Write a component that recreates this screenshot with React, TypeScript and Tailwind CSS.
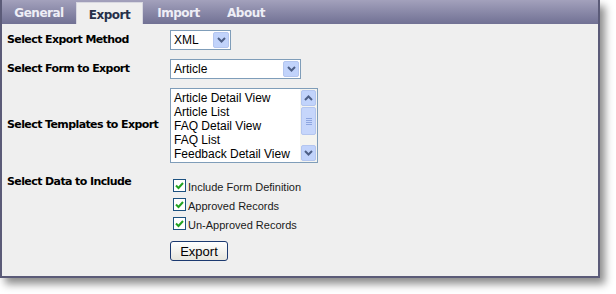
import React from "react";

const tabs = [
  { name: "General", w: "w-[74px]" },
  { name: "Export", w: "w-[67px]" },
  { name: "Import", w: "w-[71px]" },
  { name: "About", w: "w-[64px]" },
];
const templates = [
  "Article Detail View",
  "Article List",
  "FAQ Detail View",
  "FAQ List",
  "Feedback Detail View",
];
const includes = ["Include Form Definition", "Approved Records", "Un-Approved Records"];

function Chevron({ className = "" }: { className?: string }) {
  return (
    <svg width="9" height="6" viewBox="0 0 9 6" className={className}>
      <path d="M1 1 L4.5 4.5 L8 1" fill="none" stroke="#4d5f86" strokeWidth="2" />
    </svg>
  );
}

function Select({ value, width }: { value: string; width: string }) {
  return (
    <div className={`flex items-center h-[20px] border border-[#7f9db9] bg-white ${width}`}>
      <span className="flex-1 pl-[3px] text-[12px] text-black leading-none">{value}</span>
      <div className="w-[16px] h-[16px] mr-[1px] rounded-[2px] bg-[#c1d3fb] border border-[#b4c6ef] flex items-center justify-center">
        <Chevron />
      </div>
    </div>
  );
}

function Check({ label }: { label: string }) {
  return (
    <div className="flex items-center h-[19px] gap-[2px]">
      <div className="w-[13px] h-[13px] border border-[#1c5180] bg-white flex items-center justify-center ml-[3px]">
        <svg width="9" height="8" viewBox="0 0 9 8">
          <path d="M1 3.5 L3.5 6 L8 1" fill="none" stroke="#21a121" strokeWidth="2" />
        </svg>
      </div>
      <span className="text-[11px] text-[#1a1a1a] mt-[3px]">{label}</span>
    </div>
  );
}

const label = "text-[11px] font-bold text-black whitespace-nowrap tracking-[-0.6px]";

export default function App() {
  return (
    <div className="w-[616px] h-[294px] bg-white font-['Liberation_Sans',sans-serif]">
      <div className="w-[600px] h-[278px] border-2 border-[#5b5b78] border-t-0 bg-[#efefef] shadow-[5px_6px_8px_rgba(0,0,0,0.45)] flex flex-col">
        <div className="h-[24px] bg-gradient-to-b from-[#a3a1bc] to-[#717194] flex items-end">
          {tabs.map((t) =>
            t.name === "Export" ? (
              <div
                key={t.name}
                className={`${t.w} h-[22px] bg-[#efefef] border-t border-x border-[#d8d8e0] flex items-center justify-center pt-[2px] text-[12px] font-bold tracking-[-0.5px] text-[#26304a] font-['DejaVu_Sans',sans-serif]`}
              >
                {t.name}
              </div>
            ) : (
              <div
                key={t.name}
                className={`${t.w} h-[22px] flex items-center justify-center pb-[1px] text-[12px] font-bold tracking-[-0.5px] text-[#eeeef6] font-['DejaVu_Sans',sans-serif]`}
              >
                {t.name}
              </div>
            )
          )}
        </div>

        <div className="grid grid-cols-[163px_1fr] gap-y-[9px] pt-[6px] pl-[5px]">
          <div className={`self-center font-['DejaVu_Sans',sans-serif] ${label}`}>Select Export Method</div>
          <div className="flex">
            <Select value="XML" width="w-[61px]" />
          </div>

          <div className={`self-center font-['DejaVu_Sans',sans-serif] ${label}`}>Select Form to Export</div>
          <div className="flex">
            <Select value="Article" width="w-[131px]" />
          </div>

          <div className={`self-center font-['DejaVu_Sans',sans-serif] ${label}`}>Select Templates to Export</div>
          <div className="flex">
            <div className="w-[148px] h-[75px] border border-[#7f9db9] bg-white flex">
              <div className="flex-1 pl-[3px] pt-[2px] text-[12px] leading-[14px] text-black">
                {templates.map((t) => (
                  <div key={t} className="whitespace-nowrap">
                    {t}
                  </div>
                ))}
              </div>
              <div className="w-[17px] flex flex-col bg-[#f4f4f0] p-[1px] gap-[1px]">
                <div className="h-[16px] rounded-[2px] bg-[#c1d3fb] border border-[#b4c6ef] flex items-center justify-center">
                  <Chevron className="rotate-180" />
                </div>
                <div className="h-[28px] rounded-[2px] bg-[#c6d6fb] border border-[#b4c6ef] flex flex-col items-center justify-center gap-[1px]">
                  <div className="w-[6px] h-px bg-[#8ea6e0]" />
                  <div className="w-[6px] h-px bg-[#8ea6e0]" />
                  <div className="w-[6px] h-px bg-[#8ea6e0]" />
                  <div className="w-[6px] h-px bg-[#8ea6e0]" />
                </div>
                <div className="flex-1" />
                <div className="h-[16px] rounded-[2px] bg-[#c1d3fb] border border-[#b4c6ef] flex items-center justify-center">
                  <Chevron />
                </div>
              </div>
            </div>
          </div>

          <div className={`mt-[2px] font-['DejaVu_Sans',sans-serif] ${label}`}>Select Data to Include</div>
          <div className="flex flex-col mt-[4px]">
            {includes.map((l) => (
              <Check key={l} label={l} />
            ))}
            <button className="mt-[8px] w-[58px] h-[20px] rounded-[3px] border border-[#1c3a70] bg-gradient-to-b from-white to-[#e6e6de] text-[13px] text-black leading-none">
              Export
            </button>
          </div>
        </div>
      </div>
    </div>
  );
}
